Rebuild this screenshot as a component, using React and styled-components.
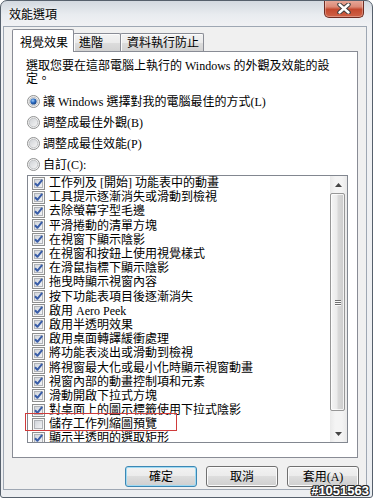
import React from 'react';
import styled, { createGlobalStyle } from 'styled-components';

const Global = createGlobalStyle`
  html, body { margin: 0; padding: 0; background: #ffffff; }
  body {
    font-family: "Liberation Serif", "Noto Sans CJK TC", serif;
    font-size: 12px;
    color: #000;
  }
  * { box-sizing: border-box; }
`;

const Window = styled.div`
  position: relative;
  width: 373px;
  height: 498px;
  border: 1px solid #56606c;
  border-radius: 7px 7px 3px 3px;
  background: linear-gradient(180deg, #d3d9e0 0px, #e9ecf0 14px, #f1f2f4 26px, #eceef1 100%);
  padding: 0 5px 7px 2px;
  display: flex;
  flex-direction: column;
  overflow: hidden;
`;

const TitleBar = styled.div`
  height: 25px;
  flex: none;
  display: flex;
  align-items: flex-start;
`;

const Title = styled.div`
  margin: 6px 0 0 6px;
  font-family: "Noto Sans CJK TC", sans-serif;
  font-size: 12px;
  line-height: 14px;
  color: #000;
  text-shadow: 0 0 5px rgba(255, 255, 255, 0.95);
`;

const Close = styled.div`
  width: 40px;
  height: 18px;
  margin: -1px 3px 0 auto;
  border: 1px solid #6e2b22;
  border-top: none;
  border-radius: 0 0 5px 5px;
  background: linear-gradient(180deg, #e9ab9c 0%, #dc8a77 40%, #c4492f 55%, #cf6247 100%);
  box-shadow: inset 0 0 0 1px rgba(255, 255, 255, 0.3);
  display: flex;
  align-items: center;
  justify-content: center;
`;

const Client = styled.div`
  flex: 1;
  background: #f0f0f0;
  border: 1px solid #9ea7b3;
  padding: 2px 8px 2px 8px;
  display: flex;
  flex-direction: column;
`;

const TabRow = styled.div`
  height: 23px;
  flex: none;
  display: flex;
  align-items: flex-end;
  margin-bottom: -1px;
  position: relative;
  z-index: 1;
`;

const Tab = styled.div`
  width: ${(p) => p.$w}px;
  height: ${(p) => (p.$active ? 23 : 18)}px;
  margin-left: ${(p) => (p.$first ? 0 : -1)}px;
  margin-bottom: ${(p) => (p.$active ? 0 : 1)}px;
  padding: ${(p) => (p.$active ? 6 : 2)}px 0 0 ${(p) => p.$pl}px;
  border: 1px solid #898c95;
  border-bottom: none;
  border-radius: 2px 2px 0 0;
  background: ${(p) =>
    p.$active ? '#ffffff' : 'linear-gradient(180deg, #f3f3f3 0%, #ebebeb 50%, #dddddd 51%, #d2d2d2 100%)'};
  box-shadow: ${(p) => (p.$active ? 'none' : 'inset 0 1px 0 #fcfcfc, inset 1px 0 0 #fcfcfc')};
  font-size: 12px;
  line-height: 14px;
  white-space: nowrap;
  position: relative;
  z-index: ${(p) => (p.$active ? 2 : 1)};
`;

const Panel = styled.div`
  height: 407px;
  flex: none;
  border: 1px solid #898c95;
  background: #ffffff;
  padding: 8px 10px 0 14px;
  display: flex;
  flex-direction: column;
`;

const Description = styled.div`
  margin-left: -1px;
  line-height: 13px;
  white-space: nowrap;
`;

const RadioGroup = styled.div`
  margin-top: 5px;
  display: flex;
  flex-direction: column;
`;

const RadioRow = styled.div`
  height: 21px;
  display: flex;
  align-items: center;
  gap: 3px;
  white-space: nowrap;
  line-height: 14px;
`;

const ListWrap = styled.div`
  position: relative;
  width: 321px;
  height: 268px;
  flex: none;
`;

const List = styled.div`
  width: 100%;
  height: 100%;
  border: 1px solid #828790;
  background: #ffffff;
  display: flex;
  overflow: hidden;
`;

const Items = styled.div`
  flex: 1;
  padding-left: 4px;
  overflow: hidden;
`;

const Item = styled.div`
  height: 14.2px;
  display: flex;
  align-items: center;
  gap: 4px;
  white-space: nowrap;
  line-height: 14px;
`;

const ScrollBar = styled.div`
  width: 17px;
  flex: none;
  display: flex;
  flex-direction: column;
  background: linear-gradient(90deg, #e9e9e9 0%, #f4f4f4 30%, #f4f4f4 70%, #e9e9e9 100%);
`;

const ScrollBtn = styled.div`
  height: 17px;
  flex: none;
  display: flex;
  align-items: center;
  justify-content: center;
`;

const Track = styled.div`
  flex: 1;
  display: flex;
  flex-direction: column;
`;

const Thumb = styled.div`
  height: ${(p) => p.$h}px;
  flex: none;
  margin-right: 2px;
  border: 1px solid #979797;
  border-radius: 2px;
  background: linear-gradient(90deg, #f5f5f5 0%, #ebebeb 45%, #d9d9d9 55%, #cbcbcb 100%);
  box-shadow: inset 0 0 0 1px rgba(255, 255, 255, 0.75);
  display: flex;
  align-items: center;
  justify-content: center;
`;

const Gripper = styled.div`
  display: flex;
  flex-direction: column;
  gap: 1px;
`;

const GripLine = styled.div`
  width: 6px;
  height: 1px;
  background: #6f6f6f;
  box-shadow: 0 1px 0 #fafafa;
`;

const Highlight = styled.div`
  position: absolute;
  left: -2px;
  top: 238px;
  width: 152px;
  height: 18px;
  border: 1px solid #cf3b3b;
  pointer-events: none;
`;

const ButtonRow = styled.div`
  margin-top: 8px;
  margin-right: -1px;
  display: flex;
  justify-content: flex-end;
  gap: 9px;
`;

const Button = styled.div`
  width: 72px;
  height: 21px;
  border: 1px solid ${(p) => (p.$default ? '#3c87b4' : '#707070')};
  border-radius: 3px;
  background: linear-gradient(180deg, #f2f2f2 0%, #ebebeb 49%, #dddddd 50%, #cfcfcf 100%);
  box-shadow: inset 0 0 0 1px ${(p) => (p.$default ? '#9fdaf3' : '#fbfbfb')};
  display: flex;
  align-items: center;
  justify-content: center;
  font-size: 12px;
  line-height: 14px;
  white-space: nowrap;
`;

const Watermark = styled.div`
  position: absolute;
  right: 3px;
  bottom: -1px;
  font-family: "Liberation Sans", "DejaVu Sans", sans-serif;
  font-weight: bold;
  font-size: 13px;
  line-height: 14px;
  color: #ffffff;
  text-shadow: 1px 0 0 #2a2a2a, -1px 0 0 #2a2a2a, 0 1px 0 #2a2a2a, 0 -1px 0 #2a2a2a,
    1px 1px 0 #2a2a2a, -1px -1px 0 #2a2a2a, 1px -1px 0 #2a2a2a, -1px 1px 0 #2a2a2a;
`;

const CloseGlyph = () => (
  <svg width="14" height="11" viewBox="0 0 14 11">
    <path d="M2.5 1.5 L11.5 9.5 M11.5 1.5 L2.5 9.5" stroke="#3b3b3b" strokeWidth="4.4" strokeLinecap="round" fill="none" />
    <path d="M2.5 1.5 L11.5 9.5 M11.5 1.5 L2.5 9.5" stroke="#ffffff" strokeWidth="2.4" strokeLinecap="round" fill="none" />
  </svg>
);

const CheckBox = ({ checked }) => (
  <svg width="13" height="13" viewBox="0 0 13 13" style={{ flex: 'none' }}>
    <defs>
      <linearGradient id="cbInner" x1="0" y1="0" x2="1" y2="1">
        <stop offset="0" stopColor="#cfd3d9" />
        <stop offset="1" stopColor="#f4f5f7" />
      </linearGradient>
    </defs>
    <rect x="0.5" y="0.5" width="12" height="12" fill="#f6f6f6" stroke="#8e8f8f" />
    <rect x="2.5" y="2.5" width="8" height="8" fill="url(#cbInner)" stroke="#b0b3b8" />
    {checked && (
      <path d="M3 6.2 L5.4 8.8 L10.2 2.8" stroke="#3a5ea8" strokeWidth="2" fill="none" strokeLinejoin="round" />
    )}
  </svg>
);

const Radio = ({ checked }) => (
  <svg width="13" height="13" viewBox="0 0 13 13" style={{ flex: 'none' }}>
    <defs>
      <linearGradient id="rbInner" x1="0" y1="0" x2="1" y2="1">
        <stop offset="0" stopColor="#cdd0d4" />
        <stop offset="1" stopColor="#f7f7f7" />
      </linearGradient>
      <radialGradient id="rbDot" cx="0.4" cy="0.35" r="0.7">
        <stop offset="0" stopColor="#9fd0ff" />
        <stop offset="0.5" stopColor="#2a6ac0" />
        <stop offset="1" stopColor="#153d7a" />
      </radialGradient>
    </defs>
    <circle cx="6.5" cy="6.5" r="6" fill="#f4f4f4" stroke="#8f9090" />
    <circle cx="6.5" cy="6.5" r="4.3" fill="url(#rbInner)" stroke="#b8babd" strokeWidth="0.8" />
    {checked && <circle cx="6.5" cy="6.5" r="3.1" fill="url(#rbDot)" />}
  </svg>
);

const Arrow = ({ up }) => (
  <svg width="7" height="4" viewBox="0 0 7 4">
    <path d={up ? 'M0 4 L3.5 0 L7 4 Z' : 'M0 0 L7 0 L3.5 4 Z'} fill="#444" />
  </svg>
);

const radios = [
  { label: '讓 Windows 選擇對我的電腦最佳的方式(L)', checked: true },
  { label: '調整成最佳外觀(B)' },
  { label: '調整成最佳效能(P)' },
  { label: '自訂(C):' },
];

const items = [
  ['工作列及 [開始] 功能表中的動畫', true],
  ['工具提示逐漸消失或滑動到檢視', true],
  ['去除螢幕字型毛邊', true],
  ['平滑捲動的清單方塊', true],
  ['在視窗下顯示陰影', true],
  ['在視窗和按鈕上使用視覺樣式', true],
  ['在滑鼠指標下顯示陰影', true],
  ['拖曳時顯示視窗內容', true],
  ['按下功能表項目後逐漸消失', true],
  ['啟用 Aero Peek', true],
  ['啟用半透明效果', true],
  ['啟用桌面轉譯緩衝處理', true],
  ['將功能表淡出或滑動到檢視', true],
  ['將視窗最大化或最小化時顯示視窗動畫', true],
  ['視窗內部的動畫控制項和元素', true],
  ['滑動開啟下拉式方塊', true],
  ['對桌面上的圖示標籤使用下拉式陰影', true],
  ['儲存工作列縮圖預覽', false],
  ['顯示半透明的選取矩形', true],
];

export default function App() {
  return (
    <>
      <Global />
      <Window>
        <TitleBar>
          <Title>效能選項</Title>
          <Close>
            <CloseGlyph />
          </Close>
        </TitleBar>
        <Client>
          <TabRow>
            <Tab $w={62} $pl={7} $active $first>視覺效果</Tab>
            <Tab $w={48} $pl={5}>進階</Tab>
            <Tab $w={84} $pl={6}>資料執行防止</Tab>
          </TabRow>
          <Panel>
            <Description>
              選取您要在這部電腦上執行的 Windows 的外觀及效能的設
              <br />
              定。
            </Description>
            <RadioGroup>
              {radios.map((r) => (
                <RadioRow key={r.label}>
                  <Radio checked={r.checked} />
                  <span>{r.label}</span>
                </RadioRow>
              ))}
            </RadioGroup>
            <ListWrap>
              <List>
                <Items>
                  {items.map(([label, checked]) => (
                    <Item key={label}>
                      <CheckBox checked={checked} />
                      <span>{label}</span>
                    </Item>
                  ))}
                </Items>
                <ScrollBar>
                  <ScrollBtn>
                    <Arrow up />
                  </ScrollBtn>
                  <Track>
                    <Thumb $h={218}>
                      <Gripper>
                        <GripLine />
                        <GripLine />
                        <GripLine />
                      </Gripper>
                    </Thumb>
                  </Track>
                  <ScrollBtn>
                    <Arrow />
                  </ScrollBtn>
                </ScrollBar>
              </List>
              <Highlight />
            </ListWrap>
          </Panel>
          <ButtonRow>
            <Button $default>確定</Button>
            <Button>取消</Button>
            <Button>套用(A)</Button>
          </ButtonRow>
        </Client>
        <Watermark>#1051563</Watermark>
      </Window>
    </>
  );
}
